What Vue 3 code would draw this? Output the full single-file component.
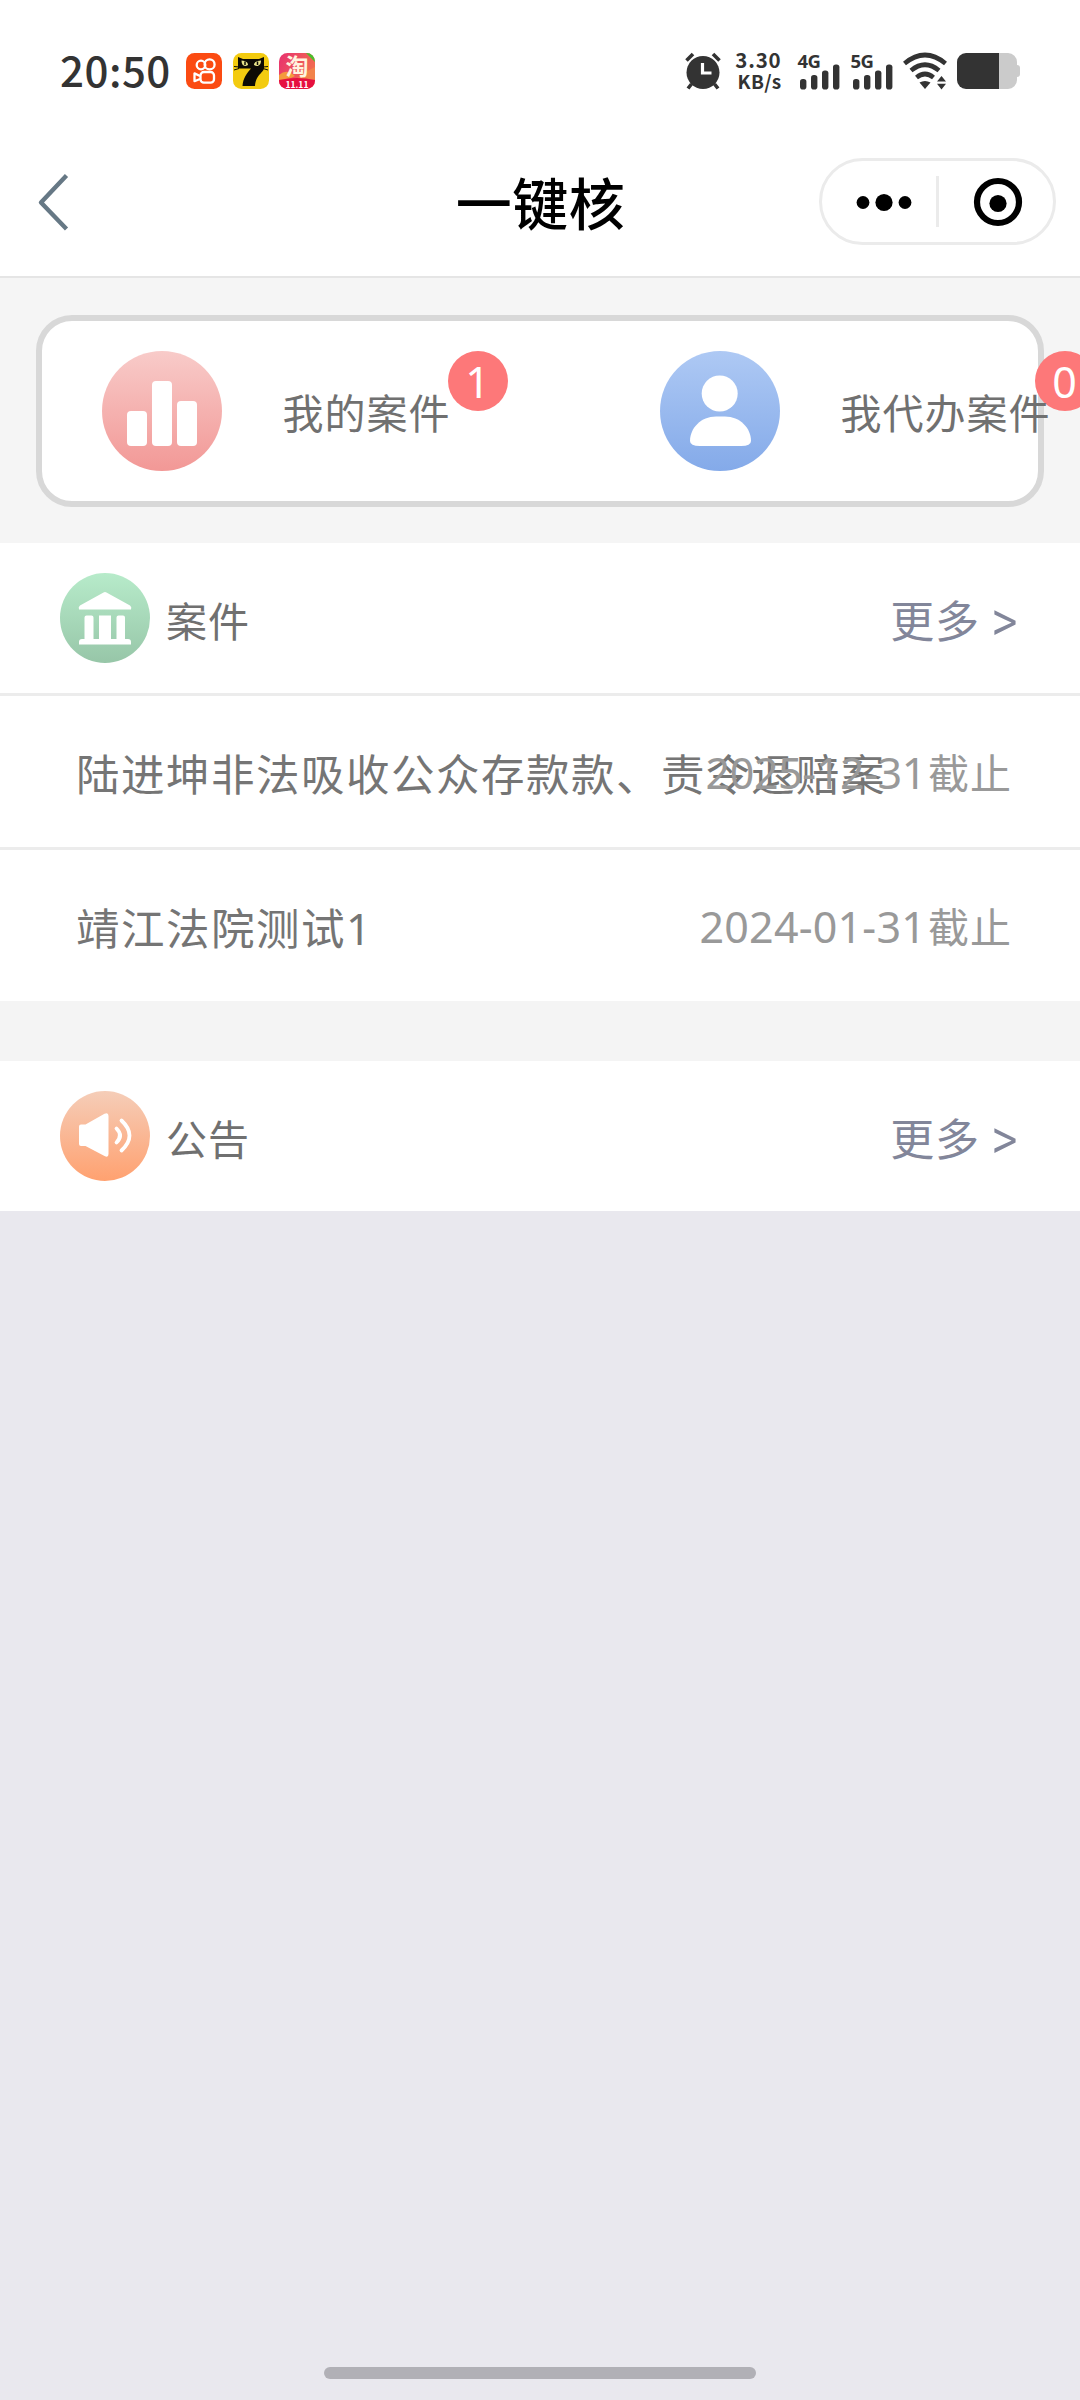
<script setup>
const shortcuts = [
  { kind: 'chart', label: '我的案件', count: 1 },
  { kind: 'person', label: '我代办案件', count: 0 },
]
const cases = [
  { title: '陆进坤非法吸收公众存款款、责令退赔案', date: '2025-12-31' },
  { title: '靖江法院测试1', date: '2024-01-31' },
]
const networks = ['4G', '5G']
</script>

<template>
  <div class="page">
    <header class="status">
      <span class="clock">20:50</span>
      <svg class="app" viewBox="0 0 36 36">
        <rect width="36" height="36" rx="8.5" fill="#fb4b12" />
        <g fill="none" stroke="#fff" stroke-width="2.3" stroke-linejoin="round">
          <circle cx="15" cy="12" r="4.3" />
          <circle cx="23.6" cy="11.4" r="5" />
          <rect x="14.5" y="19" width="13.5" height="10.6" rx="3.4" />
          <path d="M14 23 L8.5 20.4 V28.2 L14 26" />
        </g>
      </svg>
      <svg class="app" viewBox="0 0 36 36">
        <rect width="36" height="36" rx="8.5" fill="#f3cb10" />
        <path d="M5 4 L10 6 H26 L31 4 V14.5 C31 20 23 21 22 33 H9.5 C10 25 14 20 18 15.5 H5 Z" fill="#0d0b05" />
        <path d="M1 13.5 L6 14 M1 17 L6 15.5 M30 14 L35 13.5 M30 15.5 L35 17" stroke="#0d0b05" stroke-width="1" />
        <path d="M8.5 7.5 C13 8 15 9.5 15 12 C11 14.500 8.500 12 8.500 7.500 Z M28 7.500 C23 8 21 9.500 21 12 C25 14.500 28 12 28 7.500 Z" fill="#e9e58b" />
        <path d="M12 8.500 V12 M24.500 8.500 V12" stroke="#0d0b05" stroke-width="1.500" />
      </svg>
      <svg class="app" viewBox="0 0 36 36">
        <defs>
          <clipPath id="appClip"><rect width="36" height="36" rx="8.5" /></clipPath>
          <linearGradient id="festive" x1="0" y1="0" x2="1" y2="0.5">
            <stop offset="0" stop-color="#e8306f" />
            <stop offset="1" stop-color="#f2704f" />
          </linearGradient>
        </defs>
        <g clip-path="url(#appClip)">
          <rect width="36" height="36" fill="url(#festive)" />
          <path d="M27 0 H36 V9 Z" fill="#48c02d" />
          <path d="M0 22 Q8 15 16 23 L8 27 H0 Z" fill="#f59a3d" />
          <path d="M21 22 L36 14 V27 H18 Z" fill="#f2834b" />
          <path d="M0 27 Q18 23 36 27 V36 H0 Z" fill="#e6103f" />
          <text x="18" y="22" text-anchor="middle" font-size="23" font-weight="700" fill="#fff4df">淘</text>
          <text x="18" y="34.500" text-anchor="middle" font-size="8.500" font-weight="700" fill="#fff">11.11</text>
        </g>
      </svg>

      <svg class="alarm" viewBox="0 0 36 38">
        <circle cx="18" cy="20.500" r="16.500" fill="#333" />
        <g fill="none" stroke="#333" stroke-width="3.600" stroke-linecap="butt">
          <path d="M1.500 8.500 L8 2 M28 2 L34.500 8.500" />
          <path d="M6.500 32 L3 36.500 M29.500 32 L33 36.500" />
        </g>
        <path d="M17.500 11 V21 H26.500" fill="none" stroke="#fff" stroke-width="3.200" />
      </svg>
      <div class="speed"><span class="rate">3.30</span><span class="unit">KB/s</span></div>
      <div v-for="n in networks" :key="n" class="signal">
        <span class="gen">{{ n }}</span>
        <svg viewBox="0 0 40 26">
          <g fill="#333">
            <rect x="0" y="15" width="6.400" height="10.500" rx="2.800" />
            <rect x="11" y="11" width="6.400" height="14.500" rx="2.800" />
            <rect x="22" y="6.500" width="6.400" height="19" rx="2.800" />
            <rect x="33" y="0.500" width="6.400" height="25" rx="2.800" />
          </g>
        </svg>
      </div>
      <svg class="wifi" viewBox="0 0 44 38">
        <g fill="none" stroke="#333" stroke-width="4.600">
          <path d="M1.500 11.500 Q22 -5.500 42.500 11.500" />
          <path d="M8 18.500 Q22 7 36 18.500" />
          <path d="M13.500 25.500 Q22 18.500 30.500 25.500" />
        </g>
        <path d="M16.500 30.500 Q22 27.500 27.500 30.500 L22 37 Z" fill="#333" />
        <path d="M34 29.500 L38.500 24 L43 29.500 Z M34 31.800 H43 L38.500 37.500 Z" fill="#333" />
      </svg>
      <svg class="battery" viewBox="0 0 63 36">
        <path d="M42 0 H51 A9 9 0 0 1 60 9 V12 Q63 12 63 15 V21 Q63 24 60 24 V27 A9 9 0 0 1 51 36 H42 Z" fill="#cbcbcb" />
        <path d="M42 0 V36 H9 A9 9 0 0 1 0 27 V9 A9 9 0 0 1 9 0 Z" fill="#333" />
      </svg>
    </header>

    <nav class="nav">
      <svg class="back" viewBox="0 0 32 60">
        <path d="M29.500 3.500 L4 30.500 L29.500 57" fill="none" stroke="#667885" stroke-width="4.400" stroke-linejoin="round" />
      </svg>
      <h1>一键核</h1>
      <div class="capsule">
        <svg viewBox="0 0 231 82">
          <g fill="#000">
            <circle cx="41" cy="41.500" r="6.400" />
            <circle cx="62" cy="41.500" r="8.600" />
            <circle cx="83" cy="41.500" r="6.400" />
            <circle cx="176" cy="42.500" r="8.600" />
          </g>
          <rect x="114" y="15" width="3" height="51" fill="#ebebeb" />
          <circle cx="176" cy="41" r="21" fill="none" stroke="#000" stroke-width="6.200" />
        </svg>
      </div>
    </nav>

    <section class="overview">
      <div class="card">
        <div v-for="s in shortcuts" :key="s.kind" class="shortcut">
          <svg v-if="s.kind === 'chart'" class="disc" viewBox="0 0 120 120">
            <defs>
              <linearGradient id="rose" x1="0" y1="0" x2="0" y2="1">
                <stop offset="0" stop-color="#f8cbc9" /><stop offset="1" stop-color="#f29896" />
              </linearGradient>
            </defs>
            <circle cx="60" cy="60" r="60" fill="url(#rose)" />
            <g fill="#fff">
              <rect x="25" y="60" width="20" height="35" rx="4" />
              <rect x="50" y="30" width="20" height="65" rx="4" />
              <rect x="75" y="50" width="20" height="45" rx="4" />
            </g>
          </svg>
          <svg v-else class="disc" viewBox="0 0 120 120">
            <defs>
              <linearGradient id="sky" x1="0" y1="0" x2="0" y2="1">
                <stop offset="0" stop-color="#aec9f4" /><stop offset="1" stop-color="#84aae9" />
              </linearGradient>
            </defs>
            <circle cx="60" cy="60" r="60" fill="url(#sky)" />
            <circle cx="59.700" cy="42.500" r="18" fill="#fff" />
            <path d="M56 65.500 H65 C80 65.500 91 77 91 90 Q91 95 81 95 H40 Q30 95 30 90 C30 77 41 65.500 56 65.500 Z" fill="#fff" />
          </svg>
          <span class="label">{{ s.label }}</span>
          <span class="badge">{{ s.count }}</span>
        </div>
      </div>
    </section>

    <section class="panel">
      <div class="head">
        <svg class="mark" viewBox="0 0 90 90">
          <defs>
            <linearGradient id="mint" x1="0" y1="0" x2="0" y2="1">
              <stop offset="0" stop-color="#b7ebca" /><stop offset="1" stop-color="#97c6a8" />
            </linearGradient>
          </defs>
          <circle cx="45" cy="45" r="45" fill="url(#mint)" />
          <g fill="#fff">
            <path d="M43.500 19.400 Q45 18.600 46.500 19.400 L70 32.500 Q72 34 71 36.500 H19 Q18 34 20 32.500 Z" />
            <path d="M24.500 66 V44.500 Q24.500 42.500 26.500 42.500 H31.500 Q33.500 42.500 33.500 44.500 V66 H39 V42.500 H51 V66 H56.500 V44.500 Q56.500 42.500 58.500 42.500 H63 Q65 42.500 65 44.500 V66 H68 Q71 66 71 69 V71.500 H19 V69 Q19 66 22 66 Z" />
          </g>
        </svg>
        <h2>案件</h2>
        <a class="more">更多<span class="gt">&gt;</span></a>
      </div>
      <div v-for="c in cases" :key="c.title" class="row">
        <span class="title">{{ c.title }}</span>
        <span class="due"><span class="digits">{{ c.date }}</span>截止</span>
      </div>
    </section>

    <section class="panel notice">
      <div class="head">
        <svg class="mark" viewBox="0 0 90 90">
          <defs>
            <linearGradient id="peach" x1="0" y1="0" x2="0" y2="1">
              <stop offset="0" stop-color="#f5cdb8" /><stop offset="1" stop-color="#ffa170" />
            </linearGradient>
          </defs>
          <circle cx="45" cy="45" r="45" fill="url(#peach)" />
          <path d="M21 33.500 H25.500 L44.500 22.800 Q48.500 21 48.500 25 V63 Q48.500 67 44.500 65 L25.500 55 H21 Q19 55 19 53 V35.500 Q19 33.500 21 33.500 Z" fill="#fff" />
          <g fill="none" stroke="#fff" stroke-linecap="round">
            <path d="M56.500 37.500 Q63.500 44.500 56.500 51.500" stroke-width="3.800" />
            <path d="M61.500 29.500 Q77.500 44.500 61.500 59.500" stroke-width="3.800" />
          </g>
        </svg>
        <h2>公告</h2>
        <a class="more">更多<span class="gt">&gt;</span></a>
      </div>
    </section>

    <footer><div class="home"></div></footer>
  </div>
</template>

<style>
body {
  margin: 0;
}
</style>

<style scoped>
.page {
  width: 1080px;
  height: 2400px;
  overflow: hidden;
  display: flex;
  flex-direction: column;
  background: #e9e8ee;
  font-family: "Noto Sans CJK SC", "Noto Sans", sans-serif;
  color: #707070;
}
.page svg {
  display: block;
  flex: none;
}
.status {
  box-sizing: border-box;
  height: 126px;
  padding: 16px 0 0 60px;
  display: flex;
  align-items: center;
  background: #fff;
  color: #333;
}
.clock {
  width: 126px;
  margin-top: -5px;
  font-size: 42px;
  line-height: 60px;
  font-weight: 500;
  letter-spacing: 0.500px;
}
.app {
  width: 36px;
  height: 36px;
  margin: -1px 10.500px 0 0;
}
.alarm {
  width: 36px;
  height: 38px;
  margin-left: 359px;
}
.speed {
  width: 46px;
  margin: -2px 0 0 15px;
  display: flex;
  flex-direction: column;
  align-items: flex-end;
  font-weight: 700;
}
.rate {
  font-size: 20.500px;
  line-height: 22px;
  letter-spacing: 0.800px;
}
.unit {
  font-size: 19px;
  line-height: 22px;
  letter-spacing: 0.300px;
}
.signal {
  width: 42px;
  height: 38px;
  margin-left: 16px;
  display: flex;
  flex-direction: column;
}
.signal + .signal {
  margin-left: 11px;
}
.gen {
  height: 12px;
  font-family: "Noto Sans", sans-serif;
  font-size: 18.500px;
  line-height: 17px;
  font-weight: 700;
  letter-spacing: -0.500px;
}
.signal svg {
  width: 40px;
  height: 26px;
  margin-left: 2px;
}
.wifi {
  width: 44px;
  height: 38px;
  margin-left: 10px;
}
.battery {
  width: 63px;
  height: 36px;
  margin-left: 10px;
}
.nav {
  box-sizing: border-box;
  height: 152px;
  padding: 1px 24px 0 37px;
  display: grid;
  grid-template-columns: 237px 1fr 237px;
  align-items: center;
  background: #fff;
  border-bottom: 2px solid #e5e5e5;
}
.back {
  width: 32px;
  height: 60px;
}
.nav h1 {
  margin: -2px 0 0;
  padding-right: 12px;
  text-align: center;
  font-size: 56px;
  line-height: 80px;
  font-weight: 500;
  letter-spacing: 0.500px;
  color: #000;
}
.capsule {
  box-sizing: border-box;
  width: 237px;
  height: 87px;
  border: 3px solid #ebebeb;
  border-radius: 44px;
}
.capsule svg {
  width: 231px;
  height: 82px;
}
.overview {
  box-sizing: border-box;
  height: 265px;
  padding: 37px 36px 0;
  background: #f5f5f5;
}
.card {
  box-sizing: border-box;
  height: 192px;
  padding: 0 0 0 60px;
  display: flex;
  align-items: center;
  border: 6px solid #d8d8d8;
  border-radius: 36px;
  background: #fff;
}
.shortcut {
  flex: none;
  width: 558px;
  display: flex;
  align-items: flex-start;
}
.disc {
  width: 120px;
  height: 120px;
}
.label {
  margin: 30px -3px 0 60.500px;
  position: relative;
  font-size: 41px;
  line-height: 60px;
  letter-spacing: 1px;
  white-space: nowrap;
}
.shortcut:last-child .label {
  margin-right: -16px;
}
.badge {
  width: 60px;
  height: 60px;
  border-radius: 50%;
  background: #fd7879;
  color: #fff;
  font-family: "Noto Sans", sans-serif;
  font-size: 43px;
  line-height: 61px;
  text-align: center;
}
.panel {
  background: #fff;
}
.notice {
  border-top: 60px solid #f4f4f4;
}
.head {
  height: 150px;
  padding: 0 62px 0 60px;
  display: flex;
  align-items: center;
}
.mark {
  width: 90px;
  height: 90px;
}
.head h2 {
  margin: 1px 0 0 16px;
  font-size: 41px;
  line-height: 60px;
  font-weight: 400;
  letter-spacing: 1px;
}
.more {
  margin: 1px 0 0 auto;
  display: flex;
  font-size: 44px;
  line-height: 60px;
  letter-spacing: 0.800px;
  color: #82869a;
}
.gt {
  margin-left: 13px;
  transform: scaleY(1.25);
}
.row {
  height: 151px;
  padding: 0 68px 0 76px;
  display: flex;
  align-items: center;
  border-top: 3px solid #ececec;
}
.title {
  flex: 1;
  min-width: 0;
  padding-top: 5px;
  font-family: "Noto Sans", "Noto Sans CJK SC", sans-serif;
  font-size: 43.500px;
  line-height: 60px;
  letter-spacing: 1.500px;
  white-space: nowrap;
  color: #757575;
}
.due {
  position: relative;
  font-size: 41px;
  line-height: 60px;
  letter-spacing: 1px;
  white-space: nowrap;
  color: #999;
}
.digits {
  margin-right: 2px;
  font-family: "Noto Sans", sans-serif;
  font-size: 43px;
  letter-spacing: 0.200px;
}
.row:nth-child(2) .digits {
  letter-spacing: -0.400px;
}
footer {
  flex: 1;
  display: flex;
  align-items: flex-end;
  justify-content: center;
  padding-bottom: 21px;
}
.home {
  width: 432px;
  height: 12px;
  border-radius: 6px;
  background: #b1b0b6;
}
</style>
